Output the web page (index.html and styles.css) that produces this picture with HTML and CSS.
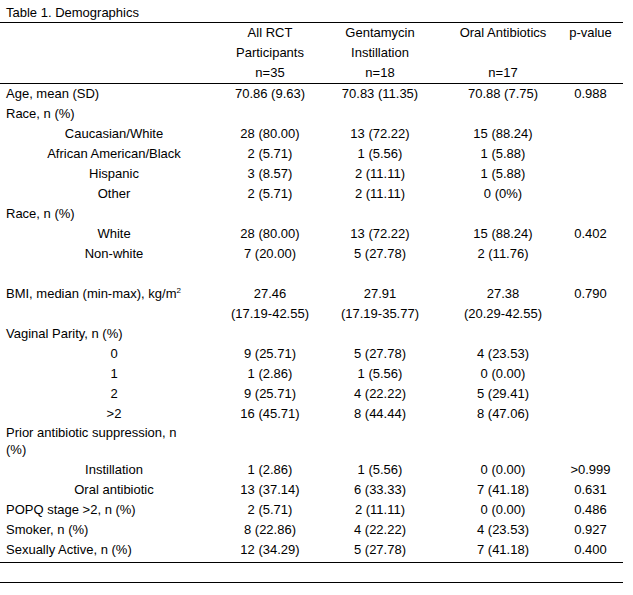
FILE: index.html
```html
<!DOCTYPE html>
<html>
<head>
<meta charset="utf-8">
<link rel="stylesheet" href="styles.css">
</head>
<body>
<div class="title">Table 1. Demographics</div>
<table class="demo">
  <colgroup>
    <col class="c1"><col class="c2"><col class="c3"><col class="c4"><col class="c5">
  </colgroup>
  <thead>
    <tr>
      <th class="lab"></th>
      <th>All RCT<br>Participants<br>n=35</th>
      <th>Gentamycin<br>Instillation<br>n=18</th>
      <th>Oral Antibiotics<br>&nbsp;<br>n=17</th>
      <th>p-value</th>
    </tr>
  </thead>
  <tbody>
    <tr><td class="lab">Age, mean (SD)</td><td>70.86 (9.63)</td><td>70.83 (11.35)</td><td>70.88 (7.75)</td><td>0.988</td></tr>
    <tr><td class="lab">Race, n (%)</td><td></td><td></td><td></td><td></td></tr>
    <tr><td class="sub">Caucasian/White</td><td>28 (80.00)</td><td>13 (72.22)</td><td>15 (88.24)</td><td></td></tr>
    <tr><td class="sub">African American/Black</td><td>2 (5.71)</td><td>1 (5.56)</td><td>1 (5.88)</td><td></td></tr>
    <tr><td class="sub">Hispanic</td><td>3 (8.57)</td><td>2 (11.11)</td><td>1 (5.88)</td><td></td></tr>
    <tr><td class="sub">Other</td><td>2 (5.71)</td><td>2 (11.11)</td><td>0 (0%)</td><td></td></tr>
    <tr><td class="lab">Race, n (%)</td><td></td><td></td><td></td><td></td></tr>
    <tr><td class="sub">White</td><td>28 (80.00)</td><td>13 (72.22)</td><td>15 (88.24)</td><td>0.402</td></tr>
    <tr><td class="sub">Non-white</td><td>7 (20.00)</td><td>5 (27.78)</td><td>2 (11.76)</td><td></td></tr>
    <tr><td class="lab">&nbsp;</td><td></td><td></td><td></td><td></td></tr>
    <tr><td class="lab">BMI, median (min-max), kg/m<sup>2</sup></td><td>27.46<br>(17.19-42.55)</td><td>27.91<br>(17.19-35.77)</td><td>27.38<br>(20.29-42.55)</td><td>0.790</td></tr>
    <tr><td class="lab">Vaginal Parity, n (%)</td><td></td><td></td><td></td><td></td></tr>
    <tr><td class="sub">0</td><td>9 (25.71)</td><td>5 (27.78)</td><td>4 (23.53)</td><td></td></tr>
    <tr><td class="sub">1</td><td>1 (2.86)</td><td>1 (5.56)</td><td>0 (0.00)</td><td></td></tr>
    <tr><td class="sub">2</td><td>9 (25.71)</td><td>4 (22.22)</td><td>5 (29.41)</td><td></td></tr>
    <tr><td class="sub">&gt;2</td><td>16 (45.71)</td><td>8 (44.44)</td><td>8 (47.06)</td><td></td></tr>
    <tr class="wrap"><td class="lab">Prior antibiotic suppression, n<br>(%)</td><td></td><td></td><td></td><td></td></tr>
    <tr><td class="sub">Instillation</td><td>1 (2.86)</td><td>1 (5.56)</td><td>0 (0.00)</td><td>&gt;0.999</td></tr>
    <tr><td class="sub">Oral antibiotic</td><td>13 (37.14)</td><td>6 (33.33)</td><td>7 (41.18)</td><td>0.631</td></tr>
    <tr><td class="lab">POPQ stage &gt;2, n (%)</td><td>2 (5.71)</td><td>2 (11.11)</td><td>0 (0.00)</td><td>0.486</td></tr>
    <tr><td class="lab">Smoker, n (%)</td><td>8 (22.86)</td><td>4 (22.22)</td><td>4 (23.53)</td><td>0.927</td></tr>
    <tr class="last"><td class="lab">Sexually Active, n (%)</td><td>12 (34.29)</td><td>5 (27.78)</td><td>7 (41.18)</td><td>0.400</td></tr>
  </tbody>
  <tfoot>
    <tr class="foot"><td colspan="5">&nbsp;</td></tr>
  </tfoot>
</table>
</body>
</html>
```
FILE: styles.css
```css
html, body {
  margin: 0;
  padding: 0;
  background: #ffffff;
}
body {
  font-family: "Liberation Sans", Arial, sans-serif;
  font-size: 13px;
  color: #000000;
}
.title {
  padding: 4px 0 0 6px;
  line-height: 17px;
  height: 18px;
}
.demo {
  border-collapse: collapse;
  width: 623px;
  table-layout: fixed;
}
.c1 { width: 228px; }
.c2 { width: 84px; }
.c3 { width: 136px; }
.c4 { width: 110px; }
.c5 { width: 65px; }
.demo thead tr {
  border-top: 1px solid #000;
  border-bottom: 1px solid #000;
}
.demo th {
  font-weight: normal;
  text-align: center;
  vertical-align: top;
  padding: 0;
  line-height: 20px;
  white-space: nowrap;
}
.demo td {
  padding: 0;
  line-height: 20px;
  text-align: center;
  vertical-align: top;
  white-space: nowrap;
}
.demo td.lab {
  text-align: left;
  padding-left: 6px;
}
.demo td.sub {
  text-align: center;
}
.demo sup {
  font-size: 8px;
  line-height: 0;
  vertical-align: 5px;
}
.demo tr.wrap td {
  line-height: 17px;
  padding-bottom: 2px;
}
.demo tr.last td {
  padding-bottom: 2px;
}
.demo tr.last {
  border-bottom: 1px solid #000;
}
.demo tr.foot {
  border-bottom: 1px solid #000;
}
.demo tr.foot td {
  line-height: 19px;
}
```
